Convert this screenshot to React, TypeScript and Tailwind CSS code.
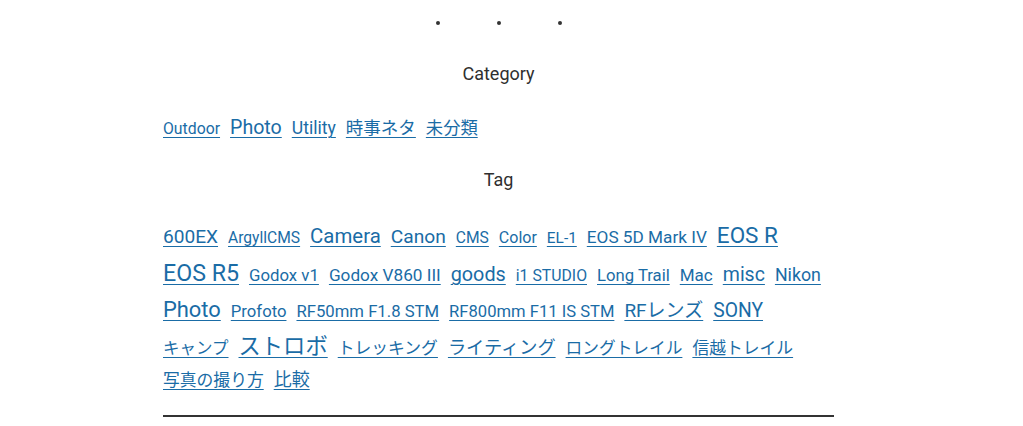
import React from 'react';

const categories: [string, number][] = [
  ['Outdoor', 15.8],
  ['Photo', 19.6],
  ['Utility', 17.6],
  ['時事ネタ', 17.5],
  ['未分類', 17.3],
];

const tags: [string, number][] = [
  ['600EX', 19.1],
  ['ArgyllCMS', 15.6],
  ['Camera', 20.4],
  ['Canon', 19.2],
  ['CMS', 15.6],
  ['Color', 16],
  ['EL-1', 15.4],
  ['EOS 5D Mark IV', 17.2],
  ['EOS R', 22.5],
  ['EOS R5', 23.2],
  ['Godox v1', 16.8],
  ['Godox V860 III', 17.2],
  ['goods', 19.8],
  ['i1 STUDIO', 15.8],
  ['Long Trail', 16.7],
  ['Mac', 17],
  ['misc', 19.5],
  ['Nikon', 17.8],
  ['Photo', 21.9],
  ['Profoto', 16.7],
  ['RF50mm F1.8 STM', 16.7],
  ['RF800mm F11 IS STM', 16.6],
  ['RFレンズ', 19],
  ['SONY', 19.3],
  ['キャンプ', 16.5],
  ['ストロボ', 22.3],
  ['トレッキング', 16.8],
  ['ライティング', 18.2],
  ['ロングトレイル', 16.7],
  ['信越トレイル', 16.8],
  ['写真の撮り方', 16.8],
  ['比較', 18],
];

function Cloud({ items }: { items: [string, number][] }) {
  return (
    <p className="text-[16px] leading-[1]">
      {items.map(([label, size], i) => (
        <a
          key={i}
          href="#"
          className="inline-block mr-[10px] leading-[1.64] text-[#1a6ca6] underline underline-offset-[3px] decoration-1"
          style={{ fontSize: size }}
        >
          {label}
        </a>
      ))}
    </p>
  );
}

export default function App() {
  return (
    <div
      className="min-h-[426px] bg-white text-[#2f2f2f]"
      style={{ fontFamily: 'Roboto, "Noto Sans CJK JP", sans-serif' }}
    >
      <div className="ml-[163px] w-[671px]">
        <div className="flex justify-center gap-[57px] pt-[21px]">
          <span className="w-[4px] h-[4px] rounded-full bg-[#333]" />
          <span className="w-[4px] h-[4px] rounded-full bg-[#333]" />
          <span className="w-[4px] h-[4px] rounded-full bg-[#333]" />
        </div>
        <h2 className="mt-[35px] text-center text-[18px] leading-[28px]">Category</h2>
        <div className="mt-[24px]">
          <Cloud items={categories} />
        </div>
        <h2 className="mt-[22px] text-center text-[18px] leading-[28px]">Tag</h2>
        <div className="mt-[23px]">
          <Cloud items={tags} />
        </div>
        <hr className="mt-[21px] border-0 h-[2px] bg-[#333]" />
      </div>
    </div>
  );
}
